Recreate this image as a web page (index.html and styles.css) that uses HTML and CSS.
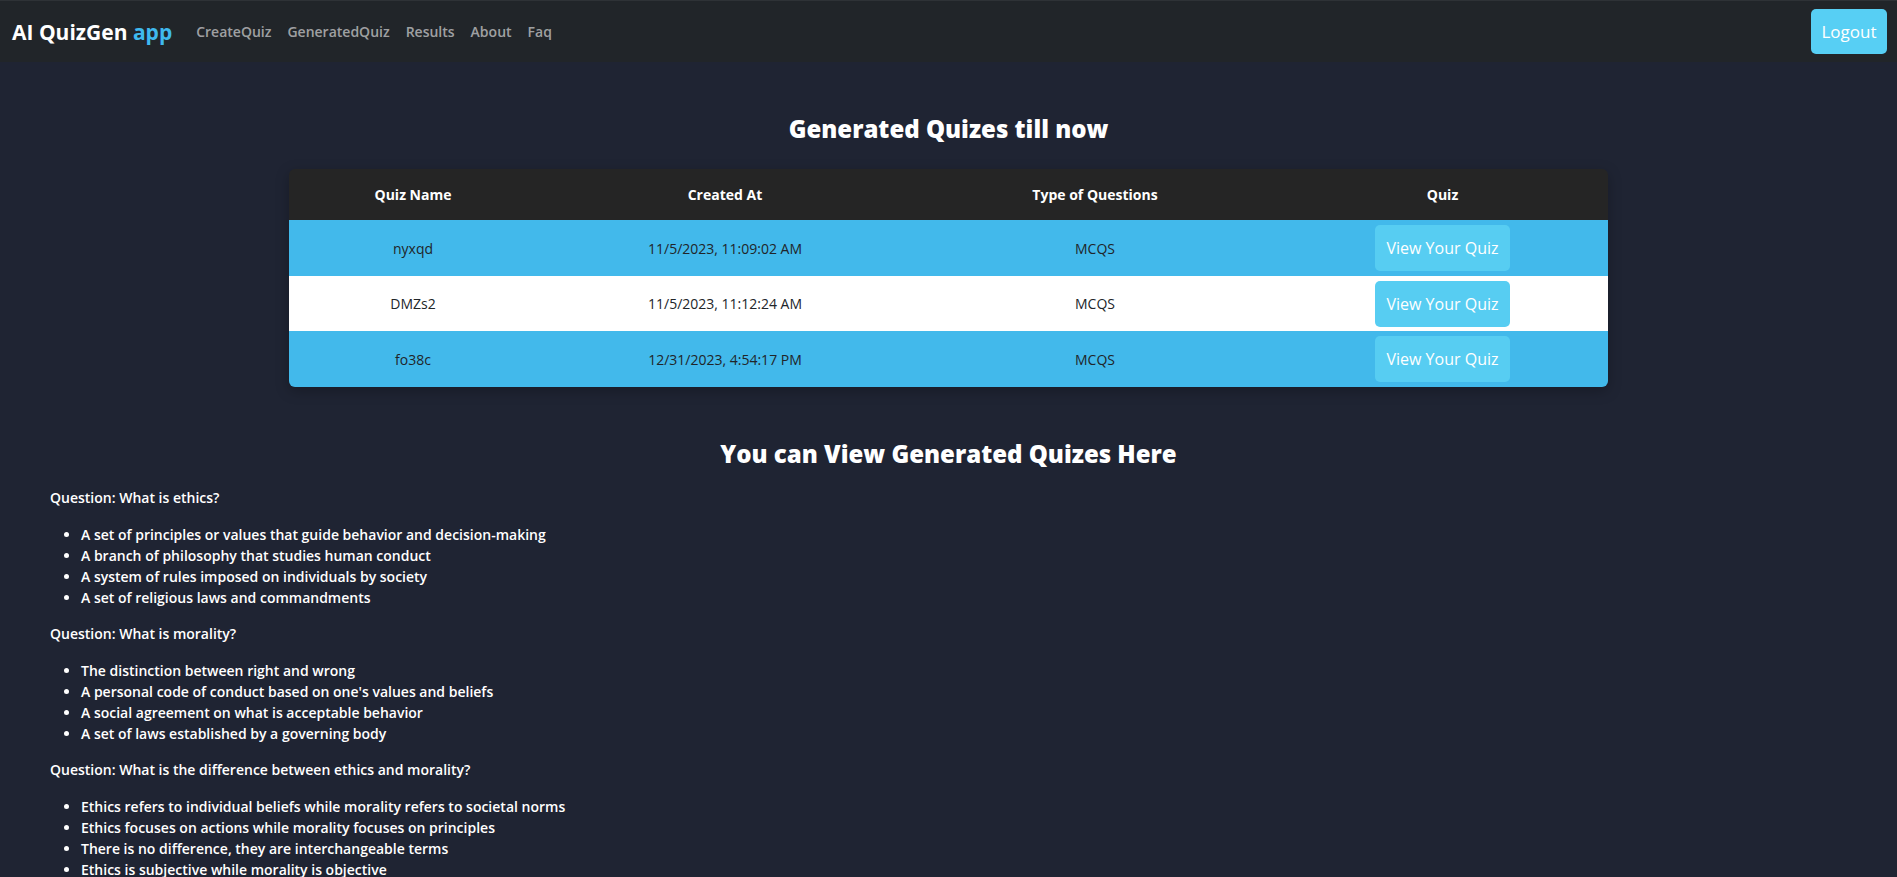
FILE: index.html
```html
<!DOCTYPE html>
<html lang="en">
<head>
<meta charset="utf-8">
<title>AI QuizGen app</title>
<link rel="stylesheet" href="styles.css">
</head>
<body>
<nav class="navbar">
  <div class="nav-left">
    <a class="brand" href="#">AI QuizGen <span class="brand-accent">app</span></a>
    <ul class="nav-links">
      <li><a href="#">CreateQuiz</a></li>
      <li><a href="#">GeneratedQuiz</a></li>
      <li><a href="#">Results</a></li>
      <li><a href="#">About</a></li>
      <li><a href="#">Faq</a></li>
    </ul>
  </div>
  <button class="logout">Logout</button>
</nav>

<main class="main">
  <h2 class="section-title first">Generated Quizes till now</h2>
  <div class="quiz-table">
    <div class="row head">
      <div class="cell">Quiz Name</div>
      <div class="cell">Created At</div>
      <div class="cell">Type of Questions</div>
      <div class="cell">Quiz</div>
    </div>
    <div class="row blue">
      <div class="cell">nyxqd</div>
      <div class="cell">11/5/2023, 11:09:02 AM</div>
      <div class="cell">MCQS</div>
      <div class="cell"><button class="view-btn">View Your Quiz</button></div>
    </div>
    <div class="row white">
      <div class="cell">DMZs2</div>
      <div class="cell">11/5/2023, 11:12:24 AM</div>
      <div class="cell">MCQS</div>
      <div class="cell"><button class="view-btn">View Your Quiz</button></div>
    </div>
    <div class="row blue last">
      <div class="cell">fo38c</div>
      <div class="cell">12/31/2023, 4:54:17 PM</div>
      <div class="cell">MCQS</div>
      <div class="cell"><button class="view-btn">View Your Quiz</button></div>
    </div>
  </div>

  <h2 class="section-title second">You can View Generated Quizes Here</h2>

  <section class="questions">
    <p class="question">Question: What is ethics?</p>
    <ul class="options">
      <li>A set of principles or values that guide behavior and decision-making</li>
      <li>A branch of philosophy that studies human conduct</li>
      <li>A system of rules imposed on individuals by society</li>
      <li>A set of religious laws and commandments</li>
    </ul>
    <p class="question">Question: What is morality?</p>
    <ul class="options">
      <li>The distinction between right and wrong</li>
      <li>A personal code of conduct based on one's values and beliefs</li>
      <li>A social agreement on what is acceptable behavior</li>
      <li>A set of laws established by a governing body</li>
    </ul>
    <p class="question">Question: What is the difference between ethics and morality?</p>
    <ul class="options">
      <li>Ethics refers to individual beliefs while morality refers to societal norms</li>
      <li>Ethics focuses on actions while morality focuses on principles</li>
      <li>There is no difference, they are interchangeable terms</li>
      <li>Ethics is subjective while morality is objective</li>
    </ul>
  </section>
</main>
</body>
</html>
```

FILE: styles.css
```css
* { box-sizing: border-box; }

html, body {
  margin: 0;
  padding: 0;
}

body {
  background: #1f2433;
  color: #ffffff;
  font-family: "Open Sans", "Noto Sans", "Liberation Sans", sans-serif;
  font-size: 14px;
}

.navbar {
  height: 62px;
  background: #212529;
  border-top: 1px solid #2e3236;
  display: flex;
  align-items: center;
  justify-content: space-between;
  padding: 0 10px 0 12px;
}

.nav-left {
  display: flex;
  align-items: center;
}

.brand {
  color: #ffffff;
  text-decoration: none;
  font-weight: 700;
  font-size: 21px;
  margin-right: 16px;
}

.brand-accent { color: #3fb9ee; }

.nav-links {
  list-style: none;
  display: flex;
  margin: 0;
  padding: 0;
}

.nav-links a {
  display: block;
  padding: 8px 8px;
  color: rgba(255, 255, 255, 0.58);
  text-decoration: none;
  font-size: 14px;
  font-weight: 600;
}

.logout {
  background: #57cff4;
  color: #ffffff;
  border: none;
  border-radius: 5px;
  width: 76px;
  height: 45px;
  font-family: inherit;
  font-size: 17px;
  font-weight: 500;
  padding: 0;
}

.main {
  padding: 0 0 40px;
}

.section-title {
  text-align: center;
  font-size: 24px;
  font-weight: 800;
  line-height: 34px;
  margin: 0;
}

.section-title.first { margin-top: 50px; margin-bottom: 23px; }
.section-title.second { margin-top: 50px; margin-bottom: 16px; }

.quiz-table {
  width: 1319px;
  margin: 0 auto;
  border-radius: 6px;
  overflow: hidden;
  box-shadow: 0 4px 14px rgba(0, 0, 0, 0.25);
}

.row {
  display: grid;
  grid-template-columns: 248px 376px 364px 331px;
  align-items: center;
  text-align: center;
}

.row.head {
  background: #252525;
  height: 51px;
  color: #ffffff;
  font-weight: 700;
}

.row.blue { background: #42b9eb; height: 56px; color: #212529; }
.row.white { background: #ffffff; height: 55px; color: #212529; }

.view-btn {
  background: #57cdf2;
  color: #ffffff;
  border: none;
  border-radius: 5px;
  width: 135px;
  height: 46px;
  font-family: inherit;
  font-size: 16px;
  font-weight: 500;
  padding: 0;
}

.questions {
  padding-left: 50px;
  font-size: 14px;
  font-weight: 600;
  line-height: 21px;
}

.question { margin: 0 0 16px; }

.options {
  margin: 0 0 15px;
  padding-left: 31px;
}
```
